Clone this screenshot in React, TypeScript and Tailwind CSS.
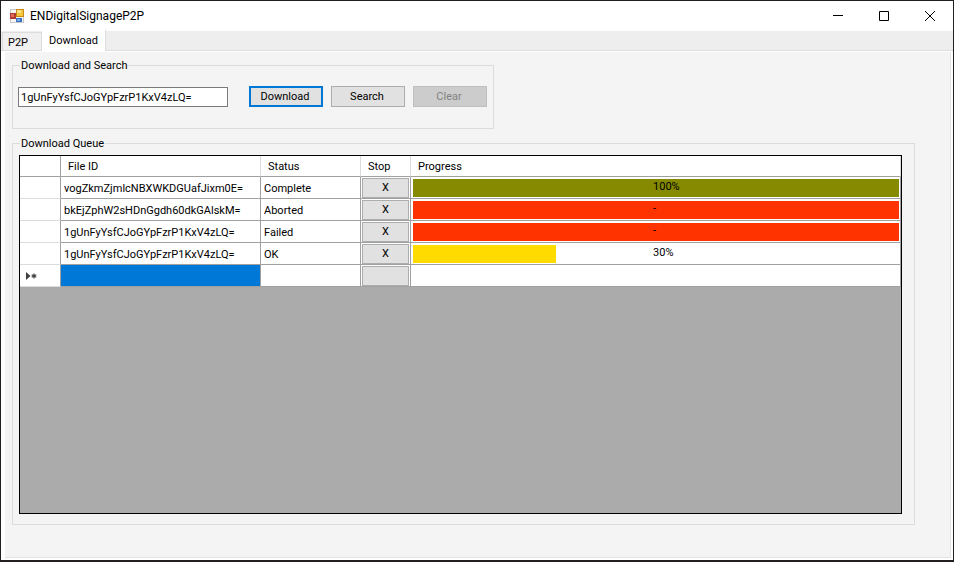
import { useState } from "react";

type Row = { id: string; status: string; text: string; percent: number; bar: string };

const rows: Row[] = [
  { id: "vogZkmZjmlcNBXWKDGUafJixm0E=", status: "Complete", text: "100%", percent: 100, bar: "bg-[#858a00]" },
  { id: "bkEjZphW2sHDnGgdh60dkGAlskM=", status: "Aborted", text: "-", percent: 100, bar: "bg-[#ff3300]" },
  { id: "1gUnFyYsfCJoGYpFzrP1KxV4zLQ=", status: "Failed", text: "-", percent: 100, bar: "bg-[#ff3300]" },
  { id: "1gUnFyYsfCJoGYpFzrP1KxV4zLQ=", status: "OK", text: "30%", percent: 30, bar: "bg-[#ffdb00]" },
];

const cell = "border-r border-b border-[#a0a0a0] p-0";
const textCell = "border-r border-b border-[#a0a0a0] p-0 pt-0.5 pl-[3px]";
const headCell = "border-r border-b border-r-[#dcdcdc] border-b-[#a0a0a0] p-0 pt-0.5 pl-[7px] text-left font-normal";
const stopButton = "ml-px block h-5 w-[47px] border border-[#adadad] bg-[#e1e1e1] text-center leading-[18px]";

function AppIcon() {
  return (
    <svg width="14" height="14" viewBox="0 0 14 14" aria-hidden="true">
      <rect x="0.5" y="0.5" width="13" height="13" fill="#f4f4f4" stroke="#c9c9c9" />
      <rect x="0" y="4" width="6" height="6" fill="#b5382f" />
      <rect x="1" y="5" width="3" height="3" fill="#d9705f" />
      <rect x="6" y="0" width="8" height="8" fill="#c98a12" />
      <rect x="7" y="1" width="6" height="6" fill="#f5c83c" />
      <rect x="7" y="1" width="4" height="3" fill="#fbe28a" />
      <rect x="6" y="9" width="6" height="4" fill="#3b6fc4" />
      <rect x="7" y="10" width="3" height="2" fill="#7fa8e6" />
    </svg>
  );
}

function TitleBar() {
  return (
    <header className="flex h-[30px] shrink-0 items-center bg-white pl-[9px]">
      <AppIcon />
      <h1 className="ml-1.5 flex-1 text-[12px] leading-4">ENDigitalSignageP2P</h1>
      <button aria-label="Minimize" className="flex h-full w-[46px] items-center justify-center">
        <svg width="10" height="10" viewBox="0 0 10 10" stroke="#000" fill="none"><path d="M0 4.5h10" /></svg>
      </button>
      <button aria-label="Maximize" className="flex h-full w-[46px] items-center justify-center">
        <svg width="10" height="10" viewBox="0 0 10 10" stroke="#000" fill="none"><path d="M.5.5h9v9h-9z" /></svg>
      </button>
      <button aria-label="Close" className="flex h-full w-[46px] items-center justify-center">
        <svg width="10" height="10" viewBox="0 0 10 10" stroke="#000" fill="none"><path d="M0 0l10 10M10 0L0 10" /></svg>
      </button>
    </header>
  );
}

export default function App() {
  const [fileId, setFileId] = useState("1gUnFyYsfCJoGYpFzrP1KxV4zLQ=");
  return (
    <div className="flex h-screen flex-col border border-b-2 border-[#231f20] bg-white font-['Roboto','Liberation_Sans',sans-serif] text-[11px] leading-[14px] text-black">
      <TitleBar />
      <div role="tablist" className="flex h-5 shrink-0 items-end border-b border-[#dcdcdc] bg-[#eeeeee] pl-px">
        <button role="tab" aria-selected="false" className="h-[18px] w-10 border border-b-0 border-[#dcdcdc] bg-[#f0f0f0] pt-0.5 pl-[5px] text-left">P2P</button>
        <button role="tab" aria-selected="true" className="-mb-px h-[21px] w-16 border-r border-[#dcdcdc] bg-white text-center">Download</button>
      </div>
      <main className="flex flex-1 flex-col bg-white px-[2px] pt-px pb-[2px]">
        <div className="ml-[2px] flex flex-1 flex-col border-r border-b border-[#e4e4e4] bg-[#f4f4f4] pt-[5px] pl-[7px]">
          <fieldset className="h-[72px] w-[482px] border border-[#dcdcdc] pl-[5px]">
            <legend className="ml-[2px] px-px pt-0.5">Download and Search</legend>
            <div className="flex items-center gap-2 pt-[13px]">
              <input
                aria-label="File ID"
                value={fileId}
                onChange={(e) => setFileId(e.target.value)}
                className="mr-[13px] h-5 w-[210px] border border-[#7a7a7a] bg-white px-[2px] pt-px outline-none"
              />
              <button className="h-[21px] w-[74px] border-2 border-[#0078d7] bg-[#e1e1e1] pt-px pr-0.5">Download</button>
              <button className="h-[21px] w-[74px] border border-[#adadad] bg-[#e1e1e1] pt-px pr-0.5">Search</button>
              <button disabled className="h-[21px] w-[74px] border border-[#bfbfbf] bg-[#cccccc] pt-px pr-0.5 text-[#838383]">Clear</button>
            </div>
          </fieldset>
          <fieldset className="mt-1.5 mr-[35px] mb-8 flex flex-1 flex-col border border-[#dcdcdc] px-1.5 pb-2.5 pr-3">
            <legend className="ml-px px-px pt-0.5">Download Queue</legend>
            <div className="mt-1 flex-1 border border-black bg-[#ababab]">
              <table className="w-full table-fixed border-separate border-spacing-0 bg-white">
                <colgroup>
                  <col className="w-[41px]" />
                  <col className="w-[200px]" />
                  <col className="w-[100px]" />
                  <col className="w-[50px]" />
                  <col />
                </colgroup>
                <thead>
                  <tr className="h-[21px]">
                    <td className={cell} />
                    <th scope="col" className={headCell}>File ID</th>
                    <th scope="col" className={headCell}>Status</th>
                    <th scope="col" className={headCell}>Stop</th>
                    <th scope="col" className={headCell}>Progress</th>
                  </tr>
                </thead>
                <tbody>
                  {rows.map((row, i) => (
                    <tr key={i} className="h-[22px]">
                      <td className="border-r border-b border-r-[#a0a0a0] border-b-[#dcdcdc] p-0" />
                      <td className={textCell}>{row.id}</td>
                      <td className={textCell}>{row.status}</td>
                      <td className={cell}>
                        <button className={stopButton} aria-label={`Stop ${row.id}`}>X</button>
                      </td>
                      <td className={cell}>
                        <div className="relative mr-px ml-[2px] h-[18px]">
                          <div className={`h-full ${row.bar}`} style={{ width: `${row.percent === 100 ? 100 : row.percent * 0.98}%` }} />
                          <span className="absolute top-px left-[49.4%]">{row.text}</span>
                        </div>
                      </td>
                    </tr>
                  ))}
                  <tr className="h-[22px]">
                    <td className="border-r border-b border-r-[#a0a0a0] border-b-[#dcdcdc] p-0 pl-1.5">
                      <svg width="11" height="8" viewBox="0 0 11 8" aria-hidden="true">
                        <path d="M0 0v8l4.500-4z" fill="#404040" />
                        <path d="M8 1.500v5M5.700 2.700l4.600 2.600M10.300 2.700l-4.600 2.600" stroke="#404040" strokeWidth="1.200" />
                      </svg>
                    </td>
                    <td className={`${cell} bg-[#0078d7]`} />
                    <td className={cell} />
                    <td className={cell}>
                      <button className={stopButton} aria-label="Stop new row" />
                    </td>
                    <td className={cell} />
                  </tr>
                </tbody>
              </table>
            </div>
          </fieldset>
        </div>
      </main>
    </div>
  );
}
